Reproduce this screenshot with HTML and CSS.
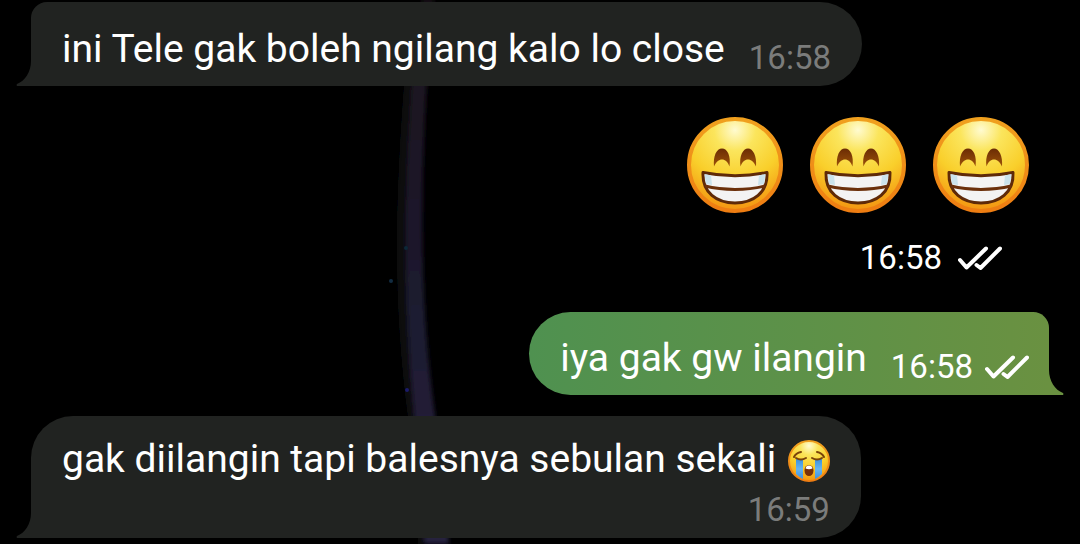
FILE: index.html
```
<!DOCTYPE html>
<html lang="id">
<head>
    <meta charset="UTF-8">
    <meta name="viewport" content="width=device-width, initial-scale=1">
    <title>Chat</title>
    <link rel="stylesheet" href="styles.css">
</head>
<body>
<!-- shared shapes -->
<svg class="defs" aria-hidden="true">
    <defs>
        <radialGradient id="face" cx="50%" cy="12%" r="90%">
            <stop offset="0" stop-color="#fffbd0"/>
            <stop offset="0.25" stop-color="#fbe55c"/>
            <stop offset="0.6" stop-color="#f9cf2b"/>
            <stop offset="1" stop-color="#f3900f"/>
        </radialGradient>
        <linearGradient id="rim" x1="0" y1="0" x2="0" y2="1">
            <stop offset="0" stop-color="#f0a01e"/>
            <stop offset="1" stop-color="#ee7d12"/>
        </linearGradient>
        <linearGradient id="eye" x1="0" y1="0" x2="0" y2="1">
            <stop offset="0" stop-color="#6b2c05"/>
            <stop offset="1" stop-color="#9c5208"/>
        </linearGradient>
        <linearGradient id="tear" x1="0" y1="0" x2="0" y2="1">
            <stop offset="0" stop-color="#3b8fdc"/>
            <stop offset="0.5" stop-color="#66b5f0"/>
            <stop offset="1" stop-color="#3e8fe0"/>
        </linearGradient>
        <linearGradient id="streak" x1="0" y1="0" x2="0" y2="1">
            <stop offset="0" stop-color="#1c161b"/>
            <stop offset="0.4" stop-color="#1b182a"/>
            <stop offset="1" stop-color="#25223f"/>
        </linearGradient>
        <filter id="soft" x="-50%" y="-5%" width="200%" height="110%">
            <feGaussianBlur stdDeviation="2"/>
        </filter>
    </defs>
    <symbol id="grin" viewBox="0 0 96 96">
        <circle cx="48" cy="48" r="46" fill="url(#face)" stroke="url(#rim)" stroke-width="4"/>
        <path d="M27 49.500C26 39 29.500 31.500 35 31.500S44 39 42.500 49.500C41 45 38 42.500 35 42.500S29 45 27 49.500Z" fill="url(#eye)"/>
        <path d="M53.500 49.500C52 39 56 31.500 61 31.500S70 39 69 49.500C67 45 64 42.500 61 42.500S55 45 53.500 49.500Z" fill="url(#eye)"/>
        <path d="M16 55.500C36 59.500 60 59.500 80 55.500C81 76 66 86 48 86S15 76 16 55.500Z" fill="#f3f3f3" stroke="#5f2a08" stroke-width="3" stroke-linejoin="round"/>
        <path d="M17.500 57L24 58.500L25 68L19 67ZM78.500 57L72 58.500L71 68L77 67Z" fill="#cbe3ec"/>
        <path d="M18 69C36 73.500 60 73.500 78 69" fill="none" stroke="#6b300b" stroke-width="3"/>
    </symbol>
    <symbol id="sob" viewBox="0 0 42 42">
        <circle cx="21" cy="21" r="20" fill="url(#face)" stroke="url(#rim)" stroke-width="2"/>
        <path d="M8 19H15V39Q11 37 8 34ZM27 19H34V34Q31 37 27 39Z" fill="url(#tear)"/>
        <path d="M6 17Q8 13 13 12M36 17Q34 13 29 12M8 18Q13 21 18 18M24 18Q29 21 34 18" fill="none" stroke="#7a4309" stroke-width="2" stroke-linecap="round"/>
        <ellipse cx="21" cy="30.500" rx="4.500" ry="5.500" fill="#783008"/>
        <path d="M17.500 28.500Q18 25.500 21 25.500T24.500 28.500Q21 30 17.500 28.500Z" fill="#fff"/>
    </symbol>
    <symbol id="read" viewBox="0 0 44 24">
        <path d="M2 14L8.500 21.500L28 2.500M18.500 19L22.500 22L42 2.500" fill="none" stroke="currentColor" stroke-width="4" stroke-linecap="round" stroke-linejoin="round"/>
    </symbol>
    <symbol id="tail" viewBox="0 0 16 28">
        <path d="M16 0V28H1Q0 27 1 26C9 23 15 14 15 3V0Z" fill="currentColor"/>
    </symbol>
</svg>

<!-- wallpaper -->
<svg class="wallpaper" viewBox="0 0 1080 544" preserveAspectRatio="xMidYMid slice" aria-hidden="true">
    <g filter="url(#soft)">
        <path d="M404 80C395 200 392 300 408 420L418 544H446L434 415C419 310 419 200 426 80L432 0H422Z" fill="#07080a"/>
        <path d="M412 80C404 200 403 300 415 420L425 544H449L435 415C420 310 420 200 427 80L434 0H422Z" fill="url(#streak)"/>
    </g>
    <circle cx="391" cy="281" r="2" fill="#122c42"/>
    <circle cx="407" cy="390" r="2" fill="#1b1b69"/>
    <circle cx="406" cy="248" r="2" fill="#0c2838"/>
</svg>

<main class="chat">
    <div class="msg in">
        <svg class="tail" aria-hidden="true"><use href="#tail"/></svg>
        <p class="text">ini Tele gak boleh ngilang kalo lo close</p>
        <div class="meta"><time>16:58</time></div>
    </div>

    <div class="sticker">
        <div class="emojis" role="img" aria-label="grin">
            <svg><use href="#grin"/></svg>
            <svg><use href="#grin"/></svg>
            <svg><use href="#grin"/></svg>
        </div>
        <div class="meta"><time>16:58</time><svg class="read" aria-hidden="true"><use href="#read"/></svg></div>
    </div>

    <div class="msg out">
        <p class="text">iya gak gw ilangin</p>
        <div class="meta"><time>16:58</time><svg class="read" aria-hidden="true"><use href="#read"/></svg></div>
        <svg class="tail" aria-hidden="true"><use href="#tail"/></svg>
    </div>

    <div class="msg in tall">
        <svg class="tail" aria-hidden="true"><use href="#tail"/></svg>
        <p class="text">gak diilangin tapi balesnya sebulan sekali <svg class="sob" role="img" aria-label="sob"><use href="#sob"/></svg></p>
        <div class="meta"><time>16:59</time></div>
    </div>
</main>
</body>
</html>
```

FILE: styles.css
```
* {
    margin: 0;
    padding: 0;
    box-sizing: border-box;
}

body {
    background: #000;
    color: #fff;
    font-family: Roboto, "Noto Sans", sans-serif;
    overflow: hidden;
}

.defs {
    position: absolute;
    width: 0;
    height: 0;
}

.wallpaper {
    position: absolute;
    top: 0;
    left: 0;
    width: 100%;
    height: 100%;
    z-index: -1;
}

.chat {
    display: flex;
    flex-direction: column;
    align-items: flex-start;
    padding: 2px 31px 6px;
}

.msg {
    position: relative;
    display: flex;
    align-items: flex-end;
    gap: 24px;
    max-width: 100%;
    padding: 24px 31px 14px;
}

.text {
    font-size: 39px;
    line-height: 46px;
}

.meta {
    display: flex;
    align-items: center;
    gap: 12px;
    font-size: 33px;
    line-height: 28px;
}

.read {
    width: 44px;
    height: 24px;
}

.tail {
    position: absolute;
    bottom: 0;
    width: 16px;
    height: 28px;
}

/* incoming */
.in {
    background: #212321;
    border-radius: 16px 42px 42px 0;
}

.in .meta {
    color: #7b7c7b;
}

.in .tail {
    right: 100%;
    margin-right: -1px;
    color: #212321;
}

/* outgoing */
.out {
    align-self: flex-end;
    padding-top: 23px;
    padding-right: 20px;
    background: linear-gradient(90deg, #4f9150, #6a9141);
    border-radius: 42px 16px 0 42px;
}

.out .tail {
    left: 100%;
    margin-left: -1px;
    color: #6a9141;
    transform: scaleX(-1);
}

.sticker {
    align-self: flex-end;
    display: flex;
    flex-direction: column;
    align-items: flex-end;
    gap: 31px;
    padding: 31px 20px 40px;
}

.emojis {
    display: flex;
    gap: 27px;
}

.emojis svg {
    width: 96px;
    height: 96px;
}

.sticker .meta {
    gap: 16px;
    padding-right: 27px;
}

.tall {
    flex-direction: column;
    gap: 14px;
    margin-top: 21px;
    padding-top: 20px;
    border-top-left-radius: 42px;
}

.sob {
    width: 42px;
    height: 42px;
    margin-left: 2px;
    vertical-align: -10px;
}
```
